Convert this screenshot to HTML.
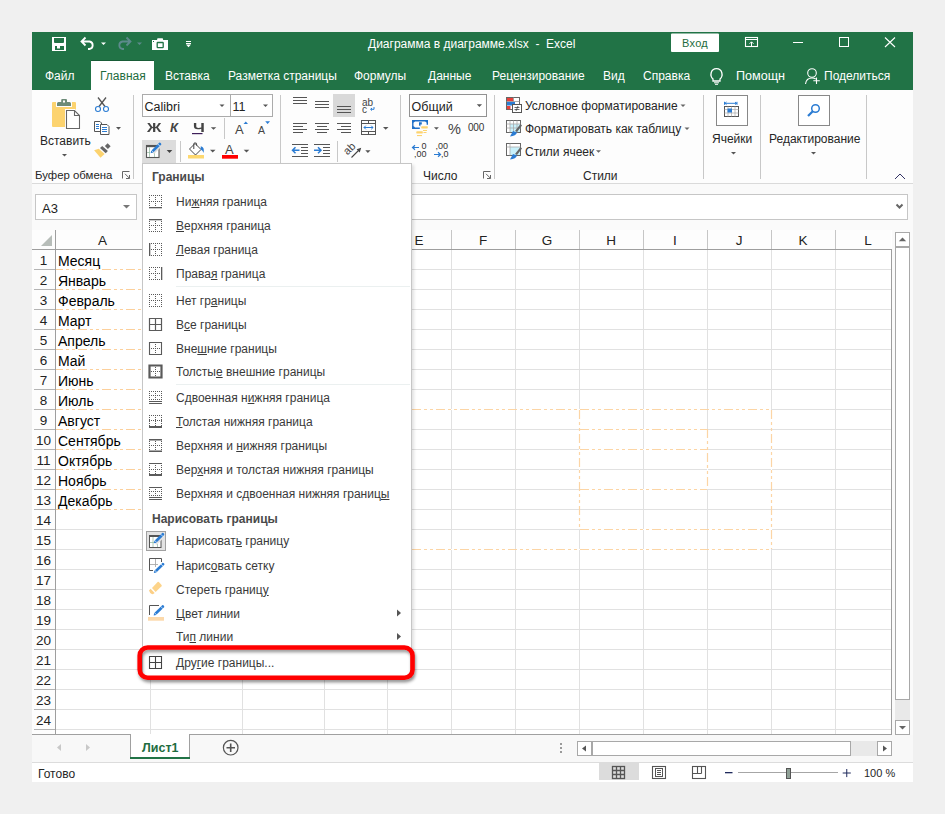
<!DOCTYPE html>
<html><head><meta charset="utf-8">
<style>
*{box-sizing:border-box}
html,body{margin:0;padding:0}
body{width:945px;height:814px;overflow:hidden;background:#f0f0f0;position:relative;font-family:"Liberation Sans",sans-serif;font-size:12px;color:#262626}
.a{position:absolute}
.t{position:absolute;white-space:pre;line-height:1}
svg{position:absolute;overflow:visible}
.ch{text-align:center;font-size:13.5px;color:#222}
.rh{left:32px;width:23px;text-align:center;font-size:13.5px;color:#222}
.cell{left:58px;font-size:14px;color:#000}
.rb{font-size:12px;color:#262626}
.mi{left:176px;font-size:12px;color:#3a3a3a}
.mh{left:152px;font-size:12px;font-weight:bold;color:#4a4a4a}
u{text-decoration:underline;text-underline-offset:1px}
</style></head><body>

<!-- window -->
<div class="a" style="left:32px;top:32px;width:881px;height:750px;background:#fafafa"></div>

<!-- title + tabs green -->
<div class="a" style="left:32px;top:32px;width:881px;height:58px;background:#217346"></div>
<div class="t" style="left:368px;top:38px;font-size:12px;color:#fff">Диаграмма в диаграмме.xlsx  -  Excel</div>

<svg style="left:0;top:0" width="945" height="95">
 <!-- save -->
 <rect x="52" y="37" width="14" height="14" fill="#fff"/>
 <path d="M54 38 H64 V42 Q64 43 63 43 H55 Q54 43 54 42 Z" fill="#217346"/>
 <rect x="55" y="46" width="9" height="4" fill="#217346"/>
 <rect x="57" y="46" width="3" height="2.5" fill="#fff"/>
 <!-- undo -->
 <path d="M85.5 37.5 L81.5 41.5 L85.5 45.5 M82 41.5 H89.5 A3.8 3.8 0 0 1 89.5 49 H88" fill="none" stroke="#fff" stroke-width="1.8"/>
 <path d="M101 42.5 H106 L103.5 45 Z" fill="#fff"/>
 <!-- redo disabled -->
 <path d="M126.5 37.5 L130.5 41.5 L126.5 45.5 M130 41.5 H122.5 A3.8 3.8 0 0 0 122.5 49 H124" fill="none" stroke="#5d8a8c" stroke-width="1.8"/>
 <path d="M137 42.5 H142 L139.5 45 Z" fill="#5d8a8c"/>
 <!-- camera -->
 <path d="M152 40 H157 L157.5 38.3 H162.7 L163.2 40 H168 V50 H152 Z" fill="#fff"/>
 <rect x="157.2" y="42.5" width="6" height="5.2" rx="0.6" fill="#fff" stroke="#217346" stroke-width="1.3"/>
 <rect x="153" y="41" width="1" height="1" fill="#217346"/>
 <!-- customize -->
 <rect x="186" y="41" width="5" height="1" fill="#fff"/>
 <rect x="186" y="43" width="5" height="1" fill="#fff"/>
 <path d="M186 44.5 H191 L188.5 47.2 Z" fill="#fff"/>
 <!-- login btn -->
 <rect x="671" y="33.5" width="48" height="18.5" rx="1" fill="#fff"/>
 <!-- ribbon display -->
 <rect x="745.5" y="37.5" width="12" height="9" fill="none" stroke="#fff" stroke-width="1.1"/>
 <rect x="745.5" y="39" width="12" height="1" fill="#fff"/>
 <path d="M751.5 46 V42 M749.5 43.8 L751.5 41.8 L753.5 43.8" fill="none" stroke="#fff" stroke-width="1"/>
 <!-- min max close -->
 <rect x="793" y="42" width="10" height="1" fill="#fff"/>
 <rect x="839.5" y="37.5" width="9" height="9" fill="none" stroke="#fff" stroke-width="1"/>
 <path d="M885 37.5 L895 47 M895 37.5 L885 47" stroke="#fff" stroke-width="1.1"/>
 <!-- bulb -->
 <path d="M713 79 C709.5 76 710.5 68.7 716.5 68.7 C722.5 68.7 723.5 76 720 79 V81 H713 Z" fill="none" stroke="#fff" stroke-width="1.3"/>
 <rect x="714" y="82.3" width="5" height="1" fill="#fff"/>
 <rect x="715" y="83.8" width="3" height="1" fill="#fff"/>
 <!-- person -->
 <circle cx="812" cy="73" r="4.3" fill="none" stroke="#fff" stroke-width="1.1"/>
 <path d="M805.5 84 C806 80 808.5 78 812 78 C813.5 78 814.8 78.4 815.8 79" fill="none" stroke="#fff" stroke-width="1.1"/>
 <path d="M816.5 77.5 V84 M813.3 80.8 H819.8" stroke="#fff" stroke-width="1.1"/>
</svg>
<div class="t" style="left:682px;top:38px;color:#1e6c40;font-size:11px;letter-spacing:0.3px">Вход</div>
<!-- tabs -->
<div class="a" style="left:91px;top:60px;width:63px;height:30px;background:#fff;border-top:1px solid #185c37"></div>
<div class="t" style="left:45px;top:70px;color:#fff;font-size:12px">Файл</div>
<div class="t" style="left:100px;top:70px;color:#1e6c40;font-size:12px">Главная</div>
<div class="t" style="left:165px;top:70px;color:#fff;font-size:12px">Вставка</div>
<div class="t" style="left:228px;top:70px;color:#fff;font-size:12px">Разметка страницы</div>
<div class="t" style="left:354px;top:70px;color:#fff;font-size:12px">Формулы</div>
<div class="t" style="left:428px;top:70px;color:#fff;font-size:12px">Данные</div>
<div class="t" style="left:492px;top:70px;color:#fff;font-size:12px">Рецензирование</div>
<div class="t" style="left:603px;top:70px;color:#fff;font-size:12px">Вид</div>
<div class="t" style="left:643px;top:70px;color:#fff;font-size:12px">Справка</div>
<div class="t" style="left:736px;top:69.7px;color:#fff;font-size:12.6px">Помощн</div>
<div class="t" style="left:824px;top:70px;color:#fff;font-size:12px">Поделиться</div>

<!-- ribbon -->
<div class="a" style="left:32px;top:90px;width:881px;height:94px;background:#fdfdfd;border-bottom:1px solid #dadada"></div>

<svg style="left:0;top:0" width="945" height="190">
 <!-- separators -->
 <g fill="#c8c8c8">
  <rect x="133" y="95" width="1" height="84"/>
  <rect x="280" y="95" width="1" height="84"/>
  <rect x="400" y="95" width="1" height="84"/>
  <rect x="494" y="95" width="1" height="84"/>
  <rect x="703" y="95" width="1" height="84"/>
  <rect x="760" y="95" width="1" height="84"/>
  <rect x="866" y="95" width="1" height="84"/>
  <rect x="224" y="118" width="1" height="21"/>
  <rect x="180" y="141" width="1" height="21"/>
  <rect x="337" y="141" width="1" height="21"/>
 </g>
 <!-- paste -->
 <path d="M53 102 H56 V107 H72 V102 H75 Q76 102 76 103 V126 Q76 127 75 127 H53 Q52 127 52 126 V103 Q52 102 53 102Z" fill="#fcd36f"/>
 <path d="M57 106 V103.5 Q57 102 58.5 102 H61.2 V100 Q61.2 99 62.2 99 H66 Q67 99 67 100 V102 H69.5 Q71 102 71 103.5 V106 Z" fill="#6c8b78"/>
 <rect x="63" y="100.5" width="2" height="2" fill="#fff"/>
 <path d="M65 109 H75 L81 115 V130 H65 Z" fill="#fff"/>
 <path d="M66.5 110.5 H74.5 L79.5 115.5 V128.5 H66.5 Z M74.5 110.5 V115.5 H79.5" fill="none" stroke="#666" stroke-width="1.1"/>
 <path d="M62 154 H67 L64.5 156.5Z" fill="#555"/>
 <!-- cut -->
 <path d="M98 97.5 L105 106.5 M106 97.5 L99 106.5" stroke="#555" stroke-width="1.3"/>
 <circle cx="98" cy="109" r="2.5" fill="#fff" stroke="#2b7cd3" stroke-width="1.1"/>
 <circle cx="106" cy="109" r="2.5" fill="#fff" stroke="#2b7cd3" stroke-width="1.1"/>
 <!-- copy -->
 <path d="M94.5 121.5 H100 L101.5 123 V131.5 H94.5 Z" fill="#fff" stroke="#555" stroke-width="1"/>
 <path d="M100.5 124.5 H107 L109 126.5 V134.5 H100.5 Z" fill="#fff" stroke="#555" stroke-width="1"/>
 <g fill="#2b7cd3"><rect x="96" y="124" width="3" height="1"/><rect x="96" y="126" width="3" height="1"/><rect x="96" y="128" width="3" height="1"/>
 <rect x="102" y="127" width="5" height="1"/><rect x="102" y="129" width="5" height="1"/><rect x="102" y="131" width="5" height="1"/></g>
 <path d="M116 127 H121 L118.5 129.7Z" fill="#555"/>
 <!-- format painter -->
 <path d="M107.6 143.2 L110.6 146.2 L107.9 148.9 L104.9 145.9Z" fill="#666"/>
 <path d="M102.2 145.9 L107.9 151 L105.7 153.2 L100 147.9Z" fill="#666"/>
 <path d="M94.1 150.3 L98.8 148.8 L104.6 154 L100.5 157.8Z" fill="#fcd36f"/>
 <!-- launcher clipboard -->
 <path d="M122.5 178.5 V171.5 H129.5 M125 173.8 L129.5 178.3 M129.5 175 V178.5 H126" fill="none" stroke="#666" stroke-width="1"/>
 <!-- font boxes -->
 <rect x="142.5" y="94.5" width="88" height="22" fill="#fff" stroke="#ababab"/>
 <rect x="230.5" y="94.5" width="42" height="22" fill="#fff" stroke="#ababab"/>
 <path d="M219.5 104.5 H224.5 L222 107Z" fill="#555"/>
 <path d="M263 104.5 H268 L265.5 107Z" fill="#555"/>
 <!-- row2 -->
 <rect x="192" y="133" width="10.5" height="1.2" fill="#3f1f5a"/>
 <path d="M210.8 127.2 H216.3 L213.5 129.8Z" fill="#555"/>
 <path d="M243.5 124 L245.8 121.5 L248 124Z" fill="#2b7cd3"/>
 <path d="M265.2 121.3 H270 L267.6 124Z" fill="#2b7cd3"/>
 <!-- borders btn -->
 <rect x="142" y="140" width="34" height="23" fill="#dcdcdc"/>
 <rect x="146.5" y="145.5" width="12.5" height="12" fill="#fff" stroke="#555" stroke-width="1.1"/><rect x="146" y="145" width="13.5" height="2.2" fill="#555"/>
 <path d="M149.5 147.5 V157 M154.5 153 V157 M147 152.5 H150" stroke="#9bbfa8" stroke-width="0.8"/>
 <path d="M152 152 L160 144 L162 146 L154 154Z" fill="#dcdcdc"/><path d="M150.60 153.20 L153.11 152.61 L161.35 144.46 Q161.25 142.66 159.45 142.54 L151.21 150.69 Z" fill="#2b7cd3"/><path d="M153.61 152.54 L151.29 150.20" stroke="#fff" stroke-width="0.7"/><path d="M160.00 146.22 L157.68 143.87" stroke="#fff" stroke-width="0.7"/>
 <path d="M166.7 150 H172.3 L169.5 153Z" fill="#444"/>
 <!-- fill -->
 <path d="M189.5 149 L195 143.5 L201 149.5 L195.5 155 Z" fill="#fff" stroke="#444" stroke-width="1"/>
 <path d="M193.8 149 V143.8 Q193.8 143 194.6 143 H195.8 Q196.6 143 196.6 143.8 V145.5" fill="none" stroke="#444" stroke-width="1"/>
 <path d="M200.8 146.3 Q204.8 147 203.6 153 Q202.8 150.2 200.6 149.6 Z" fill="#2b7cd3"/>
 <rect x="188" y="155" width="16" height="3.5" fill="#fdd86f"/>
 <path d="M210 149.8 H215.5 L212.7 152.6Z" fill="#555"/>
 <rect x="222" y="155" width="16" height="3.7" fill="#f00"/>
 <path d="M243.7 149.8 H249.3 L246.5 152.6Z" fill="#555"/>
 <!-- alignment -->
 <g fill="#555">
  <rect x="293" y="97" width="14" height="1"/><rect x="293" y="100" width="14" height="1"/><rect x="293" y="103" width="14" height="1"/>
  <rect x="315" y="101" width="14" height="1"/><rect x="315" y="104" width="14" height="1"/><rect x="315" y="107" width="14" height="1"/>
 </g>
 <rect x="333" y="94" width="22" height="23" fill="#d9d9d9"/>
 <g fill="#555">
  <rect x="337" y="106" width="14" height="1"/><rect x="337" y="109" width="14" height="1"/><rect x="337" y="112" width="14" height="1"/>
  <rect x="293" y="123" width="14" height="1"/><rect x="293" y="126" width="10" height="1"/><rect x="293" y="129" width="14" height="1"/><rect x="293" y="132" width="10" height="1"/>
  <rect x="315" y="123" width="14" height="1"/><rect x="317" y="126" width="10" height="1"/><rect x="315" y="129" width="14" height="1"/><rect x="317" y="132" width="10" height="1"/>
  <rect x="337" y="123" width="14" height="1"/><rect x="341" y="126" width="10" height="1"/><rect x="337" y="129" width="14" height="1"/><rect x="341" y="132" width="10" height="1"/>
  <rect x="292" y="144" width="16" height="1"/><rect x="301" y="147" width="7" height="1"/><rect x="301" y="150" width="7" height="1"/><rect x="301" y="153" width="7" height="1"/><rect x="292" y="156" width="16" height="1"/>
  <rect x="314" y="144" width="16" height="1"/><rect x="323" y="147" width="7" height="1"/><rect x="323" y="150" width="7" height="1"/><rect x="323" y="153" width="7" height="1"/><rect x="314" y="156" width="16" height="1"/>
 </g>
 <path d="M292.5 150.3 H299.5 M295.5 147.3 L292.5 150.3 L295.5 153.3" fill="none" stroke="#2b7cd3" stroke-width="1.5"/>
 <path d="M314 150.3 H321 M318 147.3 L321 150.3 L318 153.3" fill="none" stroke="#2b7cd3" stroke-width="1.5"/>
 <!-- wrap text -->
 <path d="M374 107 V109.3 H370.8 M372 108 L370.6 109.3 L372 110.6" fill="none" stroke="#2b7cd3" stroke-width="1"/>
 <!-- merge -->
 <rect x="361.5" y="120.5" width="14" height="14" fill="none" stroke="#555" stroke-width="1"/>
 <path d="M361.5 123.5 H375.5 M361.5 131.5 H375.5 M368.5 120.5 V123.5 M368.5 131.5 V134.5" stroke="#555" stroke-width="1"/>
 <path d="M364 127.5 H373 M365.8 125.7 L364 127.5 L365.8 129.3 M371.2 125.7 L373 127.5 L371.2 129.3" fill="none" stroke="#2b7cd3" stroke-width="1"/>
 <path d="M383 127 H388.5 L385.7 129.8Z" fill="#555"/>
 <!-- orientation -->
 <path d="M351.5 157.5 L358.5 150.5" fill="none" stroke="#444" stroke-width="1.1"/><path d="M361.2 147.8 L356.6 149.3 L359.7 152.4Z" fill="#444"/>
 <path d="M365.3 150.3 H370.5 L367.9 153.1Z" fill="#555"/>
 <!-- number -->
 <rect x="409.5" y="94.5" width="77" height="22" fill="#fff" stroke="#929292"/>
 <path d="M476.8 104.2 H482 L479.4 106.9Z" fill="#555"/>
 <path d="M419.8 128.3 H412.8 V120.7 H427.3 V124.8" fill="none" stroke="#1e6fc8" stroke-width="1.4"/>
 <path d="M412.2 120.1 H415.5 Q415 122.8 412.2 123.3Z M428 120.1 H424.7 Q425.2 122.8 428 123.3Z M412.2 128.9 H415.5 Q415 126.2 412.2 125.7Z" fill="#1e6fc8"/>
 <path d="M419 122.2 H421.8 V124.6 H420.4 V126.4 L419 125.3Z" fill="#1e6fc8"/>
 <path d="M421.5 126.3 H427.5 Q428.3 127.3 427.5 128.6 H421.5 Q420.8 127.4 421.5 126.3Z" fill="#fdd36f"/>
 <rect x="423" y="130" width="4" height="1" fill="#fdd36f"/><rect x="423.5" y="132" width="3" height="1" fill="#fdd36f"/>
 <path d="M416.6 131.2 H422.5 Q423.3 132.3 422.5 133.6 H416.6 Q415.8 132.4 416.6 131.2Z" fill="#fdd36f"/>
 <rect x="417" y="135" width="5" height="1.1" fill="#fdd36f"/>
 <path d="M434 127.2 H438.9 L436.4 129.7Z" fill="#555"/>
 <path d="M412.5 147.5 H419 M415 145.3 L412.5 147.5 L415 149.7" fill="none" stroke="#2b7cd3" stroke-width="1.2"/>
 <path d="M434 154.5 H440.5 M438 152.3 L440.5 154.5 L438 156.7" fill="none" stroke="#2b7cd3" stroke-width="1.2"/>
 <path d="M483.5 178.5 V171.5 H490.5 M486 173.8 L490.5 178.3 M490.5 175 V178.5 H487" fill="none" stroke="#666" stroke-width="1"/>
 <!-- styles icons -->
 <rect x="506.5" y="97.5" width="13" height="12" fill="#fff" stroke="#666" stroke-width="1"/>
 <rect x="507" y="98" width="6.5" height="3.5" fill="#e8403a"/>
 <rect x="507" y="102" width="8" height="3.5" fill="#2b7cd3"/>
 <rect x="507" y="106" width="3.5" height="3.2" fill="#e8403a"/>
 <path d="M513.5 97.5 V101.5 M506.5 101.5 H519.5" stroke="#999" stroke-width="0.8"/>
 <rect x="512.5" y="104.5" width="9" height="8" fill="#fff" stroke="#555" stroke-width="1"/>
 <path d="M514.5 107.5 H519.5 M514.5 109.5 H519.5 M518 106 L516 111" stroke="#444" stroke-width="0.8"/>
 <g>
  <rect x="506.5" y="120.5" width="14" height="12" fill="#fff" stroke="#666" stroke-width="1"/>
  <rect x="510" y="124" width="10" height="8" fill="#c8f1fb"/>
  <path d="M506.5 124 H520.5 M506.5 128 H520.5 M510 120.5 V132.5 M513.5 120.5 V132.5 M517 120.5 V132.5" stroke="#aaa" stroke-width="0.8"/>
  <path d="M515 131 L520.5 124 L522 125.5 L517 132Z" fill="#666"/>
  <path d="M510 136.5 L513 131 L517 132.5 Q516 136 510 136.5Z" fill="#2b7cd3"/>
 </g>
 <g>
  <rect x="506.5" y="143.5" width="14" height="12" fill="#fff" stroke="#666" stroke-width="1"/>
  <rect x="510" y="147" width="10" height="8" fill="#c8f1fb"/>
  <path d="M506.5 147 H520.5 M510 143.5 V155.5" stroke="#aaa" stroke-width="0.8"/>
  <path d="M515 154 L520.5 147 L522 148.5 L517 155Z" fill="#666"/>
  <path d="M510 159.5 L513 154 L517 155.5 Q516 159 510 159.5Z" fill="#2b7cd3"/>
 </g>
 <path d="M680.5 104.5 H685.5 L683 107Z" fill="#666"/>
 <path d="M684.5 127.5 H689.5 L687 130Z" fill="#666"/>
 <path d="M596 150.3 H601 L598.5 152.8Z" fill="#666"/>
 <!-- cells -->
 <rect x="716.5" y="95.5" width="31" height="30" fill="#fff" stroke="#888"/>
 <path d="M724.5 103.3 H737 M724.5 101.8 V104.8 M737 101.8 V104.8 M726.5 102 L725 103.3 L726.5 104.6 M735 102 L736.5 103.3 L735 104.6" fill="none" stroke="#2b7cd3" stroke-width="1"/>
 <rect x="724.5" y="106.5" width="14" height="10" fill="#fff" stroke="#555" stroke-width="1"/>
 <path d="M724.5 109.5 H738.5 M724.5 113 H738.5 M728 106.5 V116.5 M731.5 106.5 V116.5 M735 106.5 V116.5" stroke="#aaa" stroke-width="0.7"/>
 <rect x="727.5" y="108.5" width="4.5" height="4" fill="#2b7cd3"/>
 <path d="M731 152 H736 L733.5 154.5Z" fill="#555"/>
 <rect x="798.5" y="95.5" width="31" height="30" fill="#fff" stroke="#888"/>
 <circle cx="815.5" cy="108.5" r="3.8" fill="none" stroke="#2b7cd3" stroke-width="1.5"/>
 <path d="M812.8 111.2 L808 116" stroke="#2b7cd3" stroke-width="2.2"/>
 <path d="M811 152 H816 L813.5 154.5Z" fill="#555"/>
 <path d="M895 179 L900 174 L905 179" fill="none" stroke="#333366" stroke-width="1"/>
</svg>
<div class="t rb" style="left:40px;top:135px">Вставить</div>
<div class="t rb" style="left:35px;top:169.5px;font-size:11.4px">Буфер обмена</div>
<div class="t" style="left:144.5px;top:100.5px;font-size:12.5px;color:#222">Calibri</div>
<div class="t" style="left:232.5px;top:100.5px;font-size:12.5px;color:#222">11</div>
<div class="t" style="left:147px;top:121px;font-size:13px;font-weight:bold;color:#444;transform:scaleX(1.22);transform-origin:0 0">Ж</div>
<div class="t" style="left:170px;top:121px;font-size:13px;font-weight:bold;font-style:italic;color:#444">К</div>
<div class="t" style="left:192.5px;top:121px;font-size:13px;font-weight:bold;color:#444;transform:scaleX(1.3);transform-origin:0 0">Ч</div>
<div class="t" style="left:235px;top:123px;font-size:13px;color:#444">A</div>
<div class="t" style="left:258px;top:125px;font-size:10.5px;color:#444">A</div>
<div class="t" style="left:225px;top:143px;font-size:13px;color:#444">A</div>
<div class="t" style="left:362px;top:98px;font-size:10px;color:#444">ab</div><div class="t" style="left:362px;top:104.5px;font-size:10px;color:#444">c</div>
<div class="t" style="left:349px;top:146px;font-size:11px;color:#444;transform:rotate(-45deg);transform-origin:0 100%">ab</div>
<div class="t" style="left:411.5px;top:100.5px;font-size:12.5px;color:#222">Общий</div>
<div class="t" style="left:448px;top:122px;font-size:14.5px;color:#444">%</div>
<div class="t" style="left:468px;top:122.5px;font-size:10px;color:#333;letter-spacing:-0.2px">000</div>
<div class="t" style="left:421.5px;top:142px;font-size:9px;color:#333">0</div>
<div class="t" style="left:414px;top:149.5px;font-size:9px;color:#333">,00</div>
<div class="t" style="left:435.5px;top:142px;font-size:9px;color:#333">,00</div>
<div class="t" style="left:441px;top:149.5px;font-size:9px;color:#333">,0</div>
<div class="t rb" style="left:423px;top:170px">Число</div>
<div class="t rb" style="left:525px;top:100px">Условное форматирование</div>
<div class="t rb" style="left:525px;top:123px">Форматировать как таблицу</div>
<div class="t rb" style="left:525px;top:146px">Стили ячеек</div>
<div class="t rb" style="left:583px;top:170px">Стили</div>
<div class="t rb" style="left:712px;top:133px">Ячейки</div>
<div class="t rb" style="left:769px;top:133px">Редактирование</div>
<!-- formula bar -->
<div class="a" style="left:35px;top:194px;width:102px;height:26px;background:#fff;border:1px solid #c6c6c6"></div>
<div class="t" style="left:42px;top:202px;font-size:13px;color:#222">A3</div>
<div class="a" style="left:300px;top:194px;width:608px;height:26px;background:#fff;border:1px solid #c6c6c6"></div>
<svg style="left:0;top:0" width="945" height="250">
 <path d="M123 205 H130 L126.5 208.5Z" fill="#777"/>
 <path d="M896.5 204.5 L899.5 207.5 L902.5 204.5" fill="none" stroke="#666" stroke-width="2"/>
</svg>

<!-- grid -->
<div class="a" style="left:32px;top:230px;width:860px;height:505px;background:#fff"></div>
<div class="a" style="left:32px;top:230px;width:859px;height:19px;background:#fdfdfd"></div>
<div class="a" style="left:32px;top:249px;width:23px;height:485px;background:#fdfdfd"></div>
<!--GRIDSTART-->
<svg class="grid" style="left:0;top:0" width="945" height="814">
<rect x="150" y="250" width="1" height="484" fill="#e1e1e1"/>
<rect x="242" y="250" width="1" height="484" fill="#e1e1e1"/>
<rect x="324" y="250" width="1" height="484" fill="#e1e1e1"/>
<rect x="387" y="250" width="1" height="484" fill="#e1e1e1"/>
<rect x="451" y="250" width="1" height="484" fill="#e1e1e1"/>
<rect x="515" y="250" width="1" height="484" fill="#e1e1e1"/>
<rect x="579" y="250" width="1" height="484" fill="#e1e1e1"/>
<rect x="643" y="250" width="1" height="484" fill="#e1e1e1"/>
<rect x="707" y="250" width="1" height="484" fill="#e1e1e1"/>
<rect x="771" y="250" width="1" height="484" fill="#e1e1e1"/>
<rect x="835" y="250" width="1" height="484" fill="#e1e1e1"/>
<rect x="56" y="269" width="835" height="1" fill="#e1e1e1"/>
<rect x="34" y="269" width="21" height="1" fill="#b4b4b4"/>
<rect x="56" y="289" width="835" height="1" fill="#e1e1e1"/>
<rect x="34" y="289" width="21" height="1" fill="#b4b4b4"/>
<rect x="56" y="309" width="835" height="1" fill="#e1e1e1"/>
<rect x="34" y="309" width="21" height="1" fill="#b4b4b4"/>
<rect x="56" y="329" width="835" height="1" fill="#e1e1e1"/>
<rect x="34" y="329" width="21" height="1" fill="#b4b4b4"/>
<rect x="56" y="349" width="835" height="1" fill="#e1e1e1"/>
<rect x="34" y="349" width="21" height="1" fill="#b4b4b4"/>
<rect x="56" y="369" width="835" height="1" fill="#e1e1e1"/>
<rect x="34" y="369" width="21" height="1" fill="#b4b4b4"/>
<rect x="56" y="389" width="835" height="1" fill="#e1e1e1"/>
<rect x="34" y="389" width="21" height="1" fill="#b4b4b4"/>
<rect x="56" y="409" width="835" height="1" fill="#e1e1e1"/>
<rect x="34" y="409" width="21" height="1" fill="#b4b4b4"/>
<rect x="56" y="429" width="835" height="1" fill="#e1e1e1"/>
<rect x="34" y="429" width="21" height="1" fill="#b4b4b4"/>
<rect x="56" y="449" width="835" height="1" fill="#e1e1e1"/>
<rect x="34" y="449" width="21" height="1" fill="#b4b4b4"/>
<rect x="56" y="469" width="835" height="1" fill="#e1e1e1"/>
<rect x="34" y="469" width="21" height="1" fill="#b4b4b4"/>
<rect x="56" y="489" width="835" height="1" fill="#e1e1e1"/>
<rect x="34" y="489" width="21" height="1" fill="#b4b4b4"/>
<rect x="56" y="509" width="835" height="1" fill="#e1e1e1"/>
<rect x="34" y="509" width="21" height="1" fill="#b4b4b4"/>
<rect x="56" y="529" width="835" height="1" fill="#e1e1e1"/>
<rect x="34" y="529" width="21" height="1" fill="#b4b4b4"/>
<rect x="56" y="549" width="835" height="1" fill="#e1e1e1"/>
<rect x="34" y="549" width="21" height="1" fill="#b4b4b4"/>
<rect x="56" y="569" width="835" height="1" fill="#e1e1e1"/>
<rect x="34" y="569" width="21" height="1" fill="#b4b4b4"/>
<rect x="56" y="589" width="835" height="1" fill="#e1e1e1"/>
<rect x="34" y="589" width="21" height="1" fill="#b4b4b4"/>
<rect x="56" y="609" width="835" height="1" fill="#e1e1e1"/>
<rect x="34" y="609" width="21" height="1" fill="#b4b4b4"/>
<rect x="56" y="629" width="835" height="1" fill="#e1e1e1"/>
<rect x="34" y="629" width="21" height="1" fill="#b4b4b4"/>
<rect x="56" y="649" width="835" height="1" fill="#e1e1e1"/>
<rect x="34" y="649" width="21" height="1" fill="#b4b4b4"/>
<rect x="56" y="669" width="835" height="1" fill="#e1e1e1"/>
<rect x="34" y="669" width="21" height="1" fill="#b4b4b4"/>
<rect x="56" y="689" width="835" height="1" fill="#e1e1e1"/>
<rect x="34" y="689" width="21" height="1" fill="#b4b4b4"/>
<rect x="56" y="709" width="835" height="1" fill="#e1e1e1"/>
<rect x="34" y="709" width="21" height="1" fill="#b4b4b4"/>
<rect x="56" y="729" width="835" height="1" fill="#e1e1e1"/>
<rect x="34" y="729" width="21" height="1" fill="#b4b4b4"/>
<rect x="150" y="230" width="1" height="19" fill="#c6c6c6"/>
<rect x="242" y="230" width="1" height="19" fill="#c6c6c6"/>
<rect x="324" y="230" width="1" height="19" fill="#c6c6c6"/>
<rect x="387" y="230" width="1" height="19" fill="#c6c6c6"/>
<rect x="451" y="230" width="1" height="19" fill="#c6c6c6"/>
<rect x="515" y="230" width="1" height="19" fill="#c6c6c6"/>
<rect x="579" y="230" width="1" height="19" fill="#c6c6c6"/>
<rect x="643" y="230" width="1" height="19" fill="#c6c6c6"/>
<rect x="707" y="230" width="1" height="19" fill="#c6c6c6"/>
<rect x="771" y="230" width="1" height="19" fill="#c6c6c6"/>
<rect x="835" y="230" width="1" height="19" fill="#c6c6c6"/>
<rect x="32" y="249" width="860" height="1" fill="#9e9e9e"/>
<rect x="55" y="230" width="1" height="504" fill="#9e9e9e"/>
<rect x="891" y="249" width="1" height="486" fill="#9e9e9e"/>
<rect x="32" y="734" width="860" height="1" fill="#9e9e9e"/>
<path d="M41 246 L52 246 L52 235 Z" fill="#b7bdb9"/>
<line x1="56" y1="269.5" x2="150" y2="269.5" stroke="#fff" stroke-width="1"/><line x1="56" y1="269.5" x2="150" y2="269.5" stroke="#fcd09c" stroke-width="1.2" stroke-dasharray="9 3 3 3 3 3" stroke-dashoffset="2"/>
<line x1="56" y1="289.5" x2="150" y2="289.5" stroke="#fff" stroke-width="1"/><line x1="56" y1="289.5" x2="150" y2="289.5" stroke="#fcd09c" stroke-width="1.2" stroke-dasharray="9 3 3 3 3 3" stroke-dashoffset="2"/>
<line x1="56" y1="309.5" x2="150" y2="309.5" stroke="#fff" stroke-width="1"/><line x1="56" y1="309.5" x2="150" y2="309.5" stroke="#fcd09c" stroke-width="1.2" stroke-dasharray="9 3 3 3 3 3" stroke-dashoffset="2"/>
<line x1="56" y1="329.5" x2="150" y2="329.5" stroke="#fff" stroke-width="1"/><line x1="56" y1="329.5" x2="150" y2="329.5" stroke="#fcd09c" stroke-width="1.2" stroke-dasharray="9 3 3 3 3 3" stroke-dashoffset="2"/>
<line x1="56" y1="349.5" x2="150" y2="349.5" stroke="#fff" stroke-width="1"/><line x1="56" y1="349.5" x2="150" y2="349.5" stroke="#fcd09c" stroke-width="1.2" stroke-dasharray="9 3 3 3 3 3" stroke-dashoffset="2"/>
<line x1="56" y1="369.5" x2="150" y2="369.5" stroke="#fff" stroke-width="1"/><line x1="56" y1="369.5" x2="150" y2="369.5" stroke="#fcd09c" stroke-width="1.2" stroke-dasharray="9 3 3 3 3 3" stroke-dashoffset="2"/>
<line x1="56" y1="389.5" x2="150" y2="389.5" stroke="#fff" stroke-width="1"/><line x1="56" y1="389.5" x2="150" y2="389.5" stroke="#fcd09c" stroke-width="1.2" stroke-dasharray="9 3 3 3 3 3" stroke-dashoffset="2"/>
<line x1="56" y1="409.5" x2="150" y2="409.5" stroke="#fff" stroke-width="1"/><line x1="56" y1="409.5" x2="150" y2="409.5" stroke="#fcd09c" stroke-width="1.2" stroke-dasharray="9 3 3 3 3 3" stroke-dashoffset="2"/>
<line x1="56" y1="429.5" x2="150" y2="429.5" stroke="#fff" stroke-width="1"/><line x1="56" y1="429.5" x2="150" y2="429.5" stroke="#fcd09c" stroke-width="1.2" stroke-dasharray="9 3 3 3 3 3" stroke-dashoffset="2"/>
<line x1="56" y1="449.5" x2="150" y2="449.5" stroke="#fff" stroke-width="1"/><line x1="56" y1="449.5" x2="150" y2="449.5" stroke="#fcd09c" stroke-width="1.2" stroke-dasharray="9 3 3 3 3 3" stroke-dashoffset="2"/>
<line x1="56" y1="469.5" x2="150" y2="469.5" stroke="#fff" stroke-width="1"/><line x1="56" y1="469.5" x2="150" y2="469.5" stroke="#fcd09c" stroke-width="1.2" stroke-dasharray="9 3 3 3 3 3" stroke-dashoffset="2"/>
<line x1="56" y1="489.5" x2="150" y2="489.5" stroke="#fff" stroke-width="1"/><line x1="56" y1="489.5" x2="150" y2="489.5" stroke="#fcd09c" stroke-width="1.2" stroke-dasharray="9 3 3 3 3 3" stroke-dashoffset="2"/>
<line x1="56" y1="509.5" x2="150" y2="509.5" stroke="#fff" stroke-width="1"/><line x1="56" y1="509.5" x2="150" y2="509.5" stroke="#fcd09c" stroke-width="1.2" stroke-dasharray="9 3 3 3 3 3" stroke-dashoffset="2"/>
<line x1="412" y1="409.5" x2="771" y2="409.5" stroke="#fff" stroke-width="1"/>
<line x1="412" y1="549.5" x2="771" y2="549.5" stroke="#fff" stroke-width="1"/>
<line x1="771.5" y1="410" x2="771.5" y2="549" stroke="#fff" stroke-width="1"/>
<line x1="579.5" y1="410" x2="579.5" y2="529" stroke="#fff" stroke-width="1"/>
<line x1="580" y1="429.5" x2="707" y2="429.5" stroke="#fff" stroke-width="1"/>
<line x1="580" y1="449.5" x2="707" y2="449.5" stroke="#fff" stroke-width="1"/>
<line x1="707.5" y1="429" x2="707.5" y2="489" stroke="#fff" stroke-width="1"/>
<line x1="580" y1="489.5" x2="707" y2="489.5" stroke="#fff" stroke-width="1"/>
<line x1="580" y1="529.5" x2="771" y2="529.5" stroke="#fff" stroke-width="1"/>
<line x1="412" y1="409.5" x2="771" y2="409.5" stroke="#fcd5a5" stroke-width="1.2" stroke-dasharray="9 3 3 3 3 3"/>
<line x1="412" y1="549.5" x2="771" y2="549.5" stroke="#fcd5a5" stroke-width="1.2" stroke-dasharray="9 3 3 3 3 3"/>
<line x1="771.5" y1="410" x2="771.5" y2="549" stroke="#fcd5a5" stroke-width="1.2" stroke-dasharray="9 3 3 3 3 3"/>
<line x1="579.5" y1="410" x2="579.5" y2="529" stroke="#fcd5a5" stroke-width="1.2" stroke-dasharray="9 3 3 3 3 3"/>
<line x1="580" y1="429.5" x2="707" y2="429.5" stroke="#fcd5a5" stroke-width="1.2" stroke-dasharray="9 3 3 3 3 3"/>
<line x1="580" y1="449.5" x2="707" y2="449.5" stroke="#fcd5a5" stroke-width="1.2" stroke-dasharray="9 3 3 3 3 3"/>
<line x1="707.5" y1="429" x2="707.5" y2="489" stroke="#fcd5a5" stroke-width="1.2" stroke-dasharray="9 3 3 3 3 3"/>
<line x1="580" y1="489.5" x2="707" y2="489.5" stroke="#fcd5a5" stroke-width="1.2" stroke-dasharray="9 3 3 3 3 3"/>
<line x1="580" y1="529.5" x2="771" y2="529.5" stroke="#fcd5a5" stroke-width="1.2" stroke-dasharray="9 3 3 3 3 3"/>
</svg>
<div class="t ch" style="left:55px;width:95px;top:234px">A</div>
<div class="t ch" style="left:150px;width:92px;top:234px">B</div>
<div class="t ch" style="left:242px;width:82px;top:234px">C</div>
<div class="t ch" style="left:324px;width:63px;top:234px">D</div>
<div class="t ch" style="left:387px;width:64px;top:234px">E</div>
<div class="t ch" style="left:451px;width:64px;top:234px">F</div>
<div class="t ch" style="left:515px;width:64px;top:234px">G</div>
<div class="t ch" style="left:579px;width:64px;top:234px">H</div>
<div class="t ch" style="left:643px;width:64px;top:234px">I</div>
<div class="t ch" style="left:707px;width:64px;top:234px">J</div>
<div class="t ch" style="left:771px;width:64px;top:234px">K</div>
<div class="t ch" style="left:836px;width:64px;top:234px">L</div>
<div class="t rh" style="top:254px">1</div>
<div class="t rh" style="top:274px">2</div>
<div class="t rh" style="top:294px">3</div>
<div class="t rh" style="top:314px">4</div>
<div class="t rh" style="top:334px">5</div>
<div class="t rh" style="top:354px">6</div>
<div class="t rh" style="top:374px">7</div>
<div class="t rh" style="top:394px">8</div>
<div class="t rh" style="top:414px">9</div>
<div class="t rh" style="top:434px">10</div>
<div class="t rh" style="top:454px">11</div>
<div class="t rh" style="top:474px">12</div>
<div class="t rh" style="top:494px">13</div>
<div class="t rh" style="top:514px">14</div>
<div class="t rh" style="top:534px">15</div>
<div class="t rh" style="top:554px">16</div>
<div class="t rh" style="top:574px">17</div>
<div class="t rh" style="top:594px">18</div>
<div class="t rh" style="top:614px">19</div>
<div class="t rh" style="top:634px">20</div>
<div class="t rh" style="top:654px">21</div>
<div class="t rh" style="top:674px">22</div>
<div class="t rh" style="top:694px">23</div>
<div class="t rh" style="top:714px">24</div>
<div class="t cell" style="top:254px">Месяц</div>
<div class="t cell" style="top:274px">Январь</div>
<div class="t cell" style="top:294px">Февраль</div>
<div class="t cell" style="top:314px">Март</div>
<div class="t cell" style="top:334px">Апрель</div>
<div class="t cell" style="top:354px">Май</div>
<div class="t cell" style="top:374px">Июнь</div>
<div class="t cell" style="top:394px">Июль</div>
<div class="t cell" style="top:414px">Август</div>
<div class="t cell" style="top:434px">Сентябрь</div>
<div class="t cell" style="top:454px">Октябрь</div>
<div class="t cell" style="top:474px">Ноябрь</div>
<div class="t cell" style="top:494px">Декабрь</div>
<!--GRIDEND-->

<!-- sheet tabs -->
<div class="a" style="left:32px;top:735px;width:881px;height:28px;background:#f8f8f8"></div>
<svg style="left:0;top:0" width="945" height="814">
 <!-- vertical scrollbar -->
 <rect x="895" y="232" width="15" height="502" fill="#e9e9e9"/>
 <rect x="895.5" y="232.5" width="14" height="14" fill="#fff" stroke="#a8a8a8"/>
 <path d="M898.8 241.2 H906.2 L902.5 237.4Z" fill="#666"/>
 <rect x="895.5" y="247.5" width="14" height="452" fill="#fff" stroke="#a8a8a8"/>
 <rect x="895.5" y="720.5" width="14" height="14" fill="#fff" stroke="#a8a8a8"/>
 <path d="M899 726 H906 L902.5 729.5Z" fill="#666"/>
 <!-- tab -->
 <rect x="32" y="734" width="99" height="1" fill="#a0a0a0"/>
 <rect x="189" y="734" width="702" height="1" fill="#a0a0a0"/>
 <rect x="130" y="734" width="60" height="24" fill="#fff"/>
 <rect x="130" y="734" width="1" height="24" fill="#a0a0a0"/>
 <rect x="189" y="734" width="1" height="24" fill="#a0a0a0"/>
 <rect x="130" y="757" width="60" height="2" fill="#217346"/>
 <path d="M61 744 L57 747.5 L61 751Z" fill="#c8c8c8"/>
 <path d="M86 744 L90 747.5 L86 751Z" fill="#c8c8c8"/>
 <circle cx="230.7" cy="747.7" r="7.3" fill="none" stroke="#555" stroke-width="1.2"/>
 <path d="M226.5 747.7 H235 M230.7 743.5 V752" stroke="#555" stroke-width="1.6"/>
 <g fill="#9a9a9a"><rect x="560" y="743" width="2" height="2"/><rect x="560" y="747" width="2" height="2"/><rect x="560" y="751" width="2" height="2"/></g>
 <!-- h scrollbar -->
 <rect x="577" y="741" width="314" height="15" fill="#e9e9e9"/>
 <rect x="577.5" y="741.5" width="14" height="14" fill="#fff" stroke="#a8a8a8"/>
 <path d="M586 745.5 L582 748.5 L586 751.5Z" fill="#555"/>
 <rect x="592.5" y="741.5" width="258" height="14" fill="#fff" stroke="#a8a8a8"/>
 <rect x="877.5" y="741.5" width="14" height="14" fill="#fff" stroke="#a8a8a8"/>
 <path d="M883 745.5 L887 748.5 L883 751.5Z" fill="#555"/>
</svg>
<div class="t" style="left:142px;top:741.5px;font-size:12.5px;font-weight:bold;color:#1e6c40">Лист1</div>
<!-- status -->
<div class="a" style="left:32px;top:762px;width:881px;height:20px;background:#fff;border-top:1px solid #dcdcdc"></div>
<div class="t" style="left:38px;top:768px;color:#262626">Готово</div>
<svg style="left:0;top:0" width="945" height="814">
 <rect x="599" y="763" width="40" height="17" fill="#dcdcdc"/>
 <rect x="612.5" y="766.5" width="12" height="12" fill="none" stroke="#555" stroke-width="1.3"/>
 <path d="M612.5 770.5 H624.5 M612.5 774.5 H624.5 M616.5 766.5 V778.5 M620.5 766.5 V778.5" stroke="#555" stroke-width="1.3"/>
 <rect x="652.5" y="766.5" width="13" height="12" fill="none" stroke="#555" stroke-width="1.1"/>
 <rect x="655.5" y="768.5" width="7" height="8" fill="none" stroke="#555" stroke-width="1"/>
 <g fill="#555"><rect x="657" y="770" width="4" height="1"/><rect x="657" y="772" width="4" height="1"/><rect x="657" y="774" width="4" height="1"/></g>
 <rect x="692.5" y="766.5" width="13" height="12" fill="none" stroke="#555" stroke-width="1.1"/>
 <path d="M697.5 766.5 V773.5 M701.5 766.5 V773.5 M692.5 773.5 H701.5" stroke="#555" stroke-width="1.1"/>
 <rect x="725" y="772" width="7.5" height="1.3" fill="#1f2a5c"/>
 <rect x="738" y="772" width="100" height="1" fill="#a6a6a6"/>
 <rect x="786.5" y="768.5" width="4" height="10" fill="#8fa096" stroke="#555" stroke-width="1"/>
 <path d="M842.7 773 H850.8 M846.75 769 V777.1" stroke="#1f2a5c" stroke-width="1"/>
</svg>
<div class="t" style="left:864px;top:768px;font-size:11px;color:#262626">100 %</div>

<!-- menu -->
<div class="a" style="left:142px;top:163px;width:270px;height:515px;background:#fff;border:1px solid #c6c6c6;box-shadow:2px 2px 3px rgba(0,0,0,0.12)"></div>
<!--MENUSTART-->
<svg style="left:0;top:0" width="945" height="814">
<g fill="#5a5a5a"><rect x="149" y="195" width="1" height="1"/><rect x="151" y="195" width="1" height="1"/><rect x="153" y="195" width="1" height="1"/><rect x="155" y="195" width="1" height="1"/><rect x="157" y="195" width="1" height="1"/><rect x="159" y="195" width="1" height="1"/><rect x="161" y="195" width="1" height="1"/><rect x="149" y="201" width="1" height="1"/><rect x="151" y="201" width="1" height="1"/><rect x="153" y="201" width="1" height="1"/><rect x="155" y="201" width="1" height="1"/><rect x="157" y="201" width="1" height="1"/><rect x="159" y="201" width="1" height="1"/><rect x="161" y="201" width="1" height="1"/><rect x="149" y="195" width="1" height="1"/><rect x="149" y="197" width="1" height="1"/><rect x="149" y="199" width="1" height="1"/><rect x="149" y="201" width="1" height="1"/><rect x="149" y="203" width="1" height="1"/><rect x="149" y="205" width="1" height="1"/><rect x="149" y="207" width="1" height="1"/><rect x="155" y="195" width="1" height="1"/><rect x="155" y="197" width="1" height="1"/><rect x="155" y="199" width="1" height="1"/><rect x="155" y="201" width="1" height="1"/><rect x="155" y="203" width="1" height="1"/><rect x="155" y="205" width="1" height="1"/><rect x="155" y="207" width="1" height="1"/><rect x="161" y="195" width="1" height="1"/><rect x="161" y="197" width="1" height="1"/><rect x="161" y="199" width="1" height="1"/><rect x="161" y="201" width="1" height="1"/><rect x="161" y="203" width="1" height="1"/><rect x="161" y="205" width="1" height="1"/><rect x="161" y="207" width="1" height="1"/><rect x="149" y="207" width="13" height="1.3"/></g>
<g fill="#5a5a5a"><rect x="149" y="225" width="1" height="1"/><rect x="151" y="225" width="1" height="1"/><rect x="153" y="225" width="1" height="1"/><rect x="155" y="225" width="1" height="1"/><rect x="157" y="225" width="1" height="1"/><rect x="159" y="225" width="1" height="1"/><rect x="161" y="225" width="1" height="1"/><rect x="149" y="231" width="1" height="1"/><rect x="151" y="231" width="1" height="1"/><rect x="153" y="231" width="1" height="1"/><rect x="155" y="231" width="1" height="1"/><rect x="157" y="231" width="1" height="1"/><rect x="159" y="231" width="1" height="1"/><rect x="161" y="231" width="1" height="1"/><rect x="149" y="219" width="1" height="1"/><rect x="149" y="221" width="1" height="1"/><rect x="149" y="223" width="1" height="1"/><rect x="149" y="225" width="1" height="1"/><rect x="149" y="227" width="1" height="1"/><rect x="149" y="229" width="1" height="1"/><rect x="149" y="231" width="1" height="1"/><rect x="155" y="219" width="1" height="1"/><rect x="155" y="221" width="1" height="1"/><rect x="155" y="223" width="1" height="1"/><rect x="155" y="225" width="1" height="1"/><rect x="155" y="227" width="1" height="1"/><rect x="155" y="229" width="1" height="1"/><rect x="155" y="231" width="1" height="1"/><rect x="161" y="219" width="1" height="1"/><rect x="161" y="221" width="1" height="1"/><rect x="161" y="223" width="1" height="1"/><rect x="161" y="225" width="1" height="1"/><rect x="161" y="227" width="1" height="1"/><rect x="161" y="229" width="1" height="1"/><rect x="161" y="231" width="1" height="1"/><rect x="149" y="219" width="13" height="1.3"/></g>
<g fill="#5a5a5a"><rect x="149" y="243" width="1" height="1"/><rect x="151" y="243" width="1" height="1"/><rect x="153" y="243" width="1" height="1"/><rect x="155" y="243" width="1" height="1"/><rect x="157" y="243" width="1" height="1"/><rect x="159" y="243" width="1" height="1"/><rect x="161" y="243" width="1" height="1"/><rect x="149" y="249" width="1" height="1"/><rect x="151" y="249" width="1" height="1"/><rect x="153" y="249" width="1" height="1"/><rect x="155" y="249" width="1" height="1"/><rect x="157" y="249" width="1" height="1"/><rect x="159" y="249" width="1" height="1"/><rect x="161" y="249" width="1" height="1"/><rect x="149" y="255" width="1" height="1"/><rect x="151" y="255" width="1" height="1"/><rect x="153" y="255" width="1" height="1"/><rect x="155" y="255" width="1" height="1"/><rect x="157" y="255" width="1" height="1"/><rect x="159" y="255" width="1" height="1"/><rect x="161" y="255" width="1" height="1"/><rect x="155" y="243" width="1" height="1"/><rect x="155" y="245" width="1" height="1"/><rect x="155" y="247" width="1" height="1"/><rect x="155" y="249" width="1" height="1"/><rect x="155" y="251" width="1" height="1"/><rect x="155" y="253" width="1" height="1"/><rect x="155" y="255" width="1" height="1"/><rect x="161" y="243" width="1" height="1"/><rect x="161" y="245" width="1" height="1"/><rect x="161" y="247" width="1" height="1"/><rect x="161" y="249" width="1" height="1"/><rect x="161" y="251" width="1" height="1"/><rect x="161" y="253" width="1" height="1"/><rect x="161" y="255" width="1" height="1"/><rect x="149" y="243" width="1.3" height="13"/></g>
<g fill="#5a5a5a"><rect x="149" y="267" width="1" height="1"/><rect x="151" y="267" width="1" height="1"/><rect x="153" y="267" width="1" height="1"/><rect x="155" y="267" width="1" height="1"/><rect x="157" y="267" width="1" height="1"/><rect x="159" y="267" width="1" height="1"/><rect x="161" y="267" width="1" height="1"/><rect x="149" y="273" width="1" height="1"/><rect x="151" y="273" width="1" height="1"/><rect x="153" y="273" width="1" height="1"/><rect x="155" y="273" width="1" height="1"/><rect x="157" y="273" width="1" height="1"/><rect x="159" y="273" width="1" height="1"/><rect x="161" y="273" width="1" height="1"/><rect x="149" y="279" width="1" height="1"/><rect x="151" y="279" width="1" height="1"/><rect x="153" y="279" width="1" height="1"/><rect x="155" y="279" width="1" height="1"/><rect x="157" y="279" width="1" height="1"/><rect x="159" y="279" width="1" height="1"/><rect x="161" y="279" width="1" height="1"/><rect x="149" y="267" width="1" height="1"/><rect x="149" y="269" width="1" height="1"/><rect x="149" y="271" width="1" height="1"/><rect x="149" y="273" width="1" height="1"/><rect x="149" y="275" width="1" height="1"/><rect x="149" y="277" width="1" height="1"/><rect x="149" y="279" width="1" height="1"/><rect x="155" y="267" width="1" height="1"/><rect x="155" y="269" width="1" height="1"/><rect x="155" y="271" width="1" height="1"/><rect x="155" y="273" width="1" height="1"/><rect x="155" y="275" width="1" height="1"/><rect x="155" y="277" width="1" height="1"/><rect x="155" y="279" width="1" height="1"/><rect x="161" y="267" width="1.3" height="13"/></g>
<g fill="#5a5a5a"><rect x="149" y="294" width="1" height="1"/><rect x="151" y="294" width="1" height="1"/><rect x="153" y="294" width="1" height="1"/><rect x="155" y="294" width="1" height="1"/><rect x="157" y="294" width="1" height="1"/><rect x="159" y="294" width="1" height="1"/><rect x="161" y="294" width="1" height="1"/><rect x="149" y="300" width="1" height="1"/><rect x="151" y="300" width="1" height="1"/><rect x="153" y="300" width="1" height="1"/><rect x="155" y="300" width="1" height="1"/><rect x="157" y="300" width="1" height="1"/><rect x="159" y="300" width="1" height="1"/><rect x="161" y="300" width="1" height="1"/><rect x="149" y="306" width="1" height="1"/><rect x="151" y="306" width="1" height="1"/><rect x="153" y="306" width="1" height="1"/><rect x="155" y="306" width="1" height="1"/><rect x="157" y="306" width="1" height="1"/><rect x="159" y="306" width="1" height="1"/><rect x="161" y="306" width="1" height="1"/><rect x="149" y="294" width="1" height="1"/><rect x="149" y="296" width="1" height="1"/><rect x="149" y="298" width="1" height="1"/><rect x="149" y="300" width="1" height="1"/><rect x="149" y="302" width="1" height="1"/><rect x="149" y="304" width="1" height="1"/><rect x="149" y="306" width="1" height="1"/><rect x="155" y="294" width="1" height="1"/><rect x="155" y="296" width="1" height="1"/><rect x="155" y="298" width="1" height="1"/><rect x="155" y="300" width="1" height="1"/><rect x="155" y="302" width="1" height="1"/><rect x="155" y="304" width="1" height="1"/><rect x="155" y="306" width="1" height="1"/><rect x="161" y="294" width="1" height="1"/><rect x="161" y="296" width="1" height="1"/><rect x="161" y="298" width="1" height="1"/><rect x="161" y="300" width="1" height="1"/><rect x="161" y="302" width="1" height="1"/><rect x="161" y="304" width="1" height="1"/><rect x="161" y="306" width="1" height="1"/></g>
<g fill="#5a5a5a"></g><path d="M149.5 318.5 h12 v12 h-12 Z M149.5 324.5 h12 M155.5 318.5 v12" fill="none" stroke="#5a5a5a" stroke-width="1.2"/><g fill="#5a5a5a"></g>
<g fill="#5a5a5a"><rect x="149" y="348" width="1" height="1"/><rect x="151" y="348" width="1" height="1"/><rect x="153" y="348" width="1" height="1"/><rect x="155" y="348" width="1" height="1"/><rect x="157" y="348" width="1" height="1"/><rect x="159" y="348" width="1" height="1"/><rect x="161" y="348" width="1" height="1"/><rect x="155" y="342" width="1" height="1"/><rect x="155" y="344" width="1" height="1"/><rect x="155" y="346" width="1" height="1"/><rect x="155" y="348" width="1" height="1"/><rect x="155" y="350" width="1" height="1"/><rect x="155" y="352" width="1" height="1"/><rect x="155" y="354" width="1" height="1"/></g><path d="M149.5 342.5 h12 v12 h-12 Z" fill="none" stroke="#5a5a5a" stroke-width="1.1"/><g fill="#5a5a5a"></g>
<g fill="#5a5a5a"><rect x="149" y="371" width="1" height="1"/><rect x="151" y="371" width="1" height="1"/><rect x="153" y="371" width="1" height="1"/><rect x="155" y="371" width="1" height="1"/><rect x="157" y="371" width="1" height="1"/><rect x="159" y="371" width="1" height="1"/><rect x="161" y="371" width="1" height="1"/><rect x="155" y="365" width="1" height="1"/><rect x="155" y="367" width="1" height="1"/><rect x="155" y="369" width="1" height="1"/><rect x="155" y="371" width="1" height="1"/><rect x="155" y="373" width="1" height="1"/><rect x="155" y="375" width="1" height="1"/><rect x="155" y="377" width="1" height="1"/></g><path d="M149.5 365.5 h12 v12 h-12 Z" fill="none" stroke="#5a5a5a" stroke-width="2.2"/><g fill="#5a5a5a"></g>
<g fill="#5a5a5a"><rect x="149" y="391" width="1" height="1"/><rect x="151" y="391" width="1" height="1"/><rect x="153" y="391" width="1" height="1"/><rect x="155" y="391" width="1" height="1"/><rect x="157" y="391" width="1" height="1"/><rect x="159" y="391" width="1" height="1"/><rect x="161" y="391" width="1" height="1"/><rect x="149" y="395" width="1" height="1"/><rect x="151" y="395" width="1" height="1"/><rect x="153" y="395" width="1" height="1"/><rect x="155" y="395" width="1" height="1"/><rect x="157" y="395" width="1" height="1"/><rect x="159" y="395" width="1" height="1"/><rect x="161" y="395" width="1" height="1"/><rect x="149" y="399" width="1" height="1"/><rect x="151" y="399" width="1" height="1"/><rect x="153" y="399" width="1" height="1"/><rect x="155" y="399" width="1" height="1"/><rect x="157" y="399" width="1" height="1"/><rect x="159" y="399" width="1" height="1"/><rect x="161" y="399" width="1" height="1"/><rect x="149" y="391" width="1" height="1"/><rect x="149" y="393" width="1" height="1"/><rect x="149" y="395" width="1" height="1"/><rect x="149" y="397" width="1" height="1"/><rect x="149" y="399" width="1" height="1"/><rect x="155" y="391" width="1" height="1"/><rect x="155" y="393" width="1" height="1"/><rect x="155" y="395" width="1" height="1"/><rect x="155" y="397" width="1" height="1"/><rect x="155" y="399" width="1" height="1"/><rect x="161" y="391" width="1" height="1"/><rect x="161" y="393" width="1" height="1"/><rect x="161" y="395" width="1" height="1"/><rect x="161" y="397" width="1" height="1"/><rect x="161" y="399" width="1" height="1"/><rect x="149" y="401" width="13" height="1"/><rect x="149" y="403" width="13" height="1"/></g>
<g fill="#5a5a5a"><rect x="149" y="415" width="1" height="1"/><rect x="151" y="415" width="1" height="1"/><rect x="153" y="415" width="1" height="1"/><rect x="155" y="415" width="1" height="1"/><rect x="157" y="415" width="1" height="1"/><rect x="159" y="415" width="1" height="1"/><rect x="161" y="415" width="1" height="1"/><rect x="149" y="420" width="1" height="1"/><rect x="151" y="420" width="1" height="1"/><rect x="153" y="420" width="1" height="1"/><rect x="155" y="420" width="1" height="1"/><rect x="157" y="420" width="1" height="1"/><rect x="159" y="420" width="1" height="1"/><rect x="161" y="420" width="1" height="1"/><rect x="149" y="415" width="1" height="1"/><rect x="149" y="417" width="1" height="1"/><rect x="149" y="419" width="1" height="1"/><rect x="149" y="421" width="1" height="1"/><rect x="149" y="423" width="1" height="1"/><rect x="149" y="425" width="1" height="1"/><rect x="155" y="415" width="1" height="1"/><rect x="155" y="417" width="1" height="1"/><rect x="155" y="419" width="1" height="1"/><rect x="155" y="421" width="1" height="1"/><rect x="155" y="423" width="1" height="1"/><rect x="155" y="425" width="1" height="1"/><rect x="161" y="415" width="1" height="1"/><rect x="161" y="417" width="1" height="1"/><rect x="161" y="419" width="1" height="1"/><rect x="161" y="421" width="1" height="1"/><rect x="161" y="423" width="1" height="1"/><rect x="161" y="425" width="1" height="1"/><rect x="149" y="426" width="13" height="2"/></g>
<g fill="#5a5a5a"><rect x="149" y="445" width="1" height="1"/><rect x="151" y="445" width="1" height="1"/><rect x="153" y="445" width="1" height="1"/><rect x="155" y="445" width="1" height="1"/><rect x="157" y="445" width="1" height="1"/><rect x="159" y="445" width="1" height="1"/><rect x="161" y="445" width="1" height="1"/><rect x="149" y="439" width="1" height="1"/><rect x="149" y="441" width="1" height="1"/><rect x="149" y="443" width="1" height="1"/><rect x="149" y="445" width="1" height="1"/><rect x="149" y="447" width="1" height="1"/><rect x="149" y="449" width="1" height="1"/><rect x="149" y="451" width="1" height="1"/><rect x="155" y="439" width="1" height="1"/><rect x="155" y="441" width="1" height="1"/><rect x="155" y="443" width="1" height="1"/><rect x="155" y="445" width="1" height="1"/><rect x="155" y="447" width="1" height="1"/><rect x="155" y="449" width="1" height="1"/><rect x="155" y="451" width="1" height="1"/><rect x="161" y="439" width="1" height="1"/><rect x="161" y="441" width="1" height="1"/><rect x="161" y="443" width="1" height="1"/><rect x="161" y="445" width="1" height="1"/><rect x="161" y="447" width="1" height="1"/><rect x="161" y="449" width="1" height="1"/><rect x="161" y="451" width="1" height="1"/><rect x="149" y="439" width="13" height="1.5"/><rect x="149" y="450.5" width="13" height="1.5"/></g>
<g fill="#5a5a5a"><rect x="149" y="469" width="1" height="1"/><rect x="151" y="469" width="1" height="1"/><rect x="153" y="469" width="1" height="1"/><rect x="155" y="469" width="1" height="1"/><rect x="157" y="469" width="1" height="1"/><rect x="159" y="469" width="1" height="1"/><rect x="161" y="469" width="1" height="1"/><rect x="149" y="463" width="1" height="1"/><rect x="149" y="465" width="1" height="1"/><rect x="149" y="467" width="1" height="1"/><rect x="149" y="469" width="1" height="1"/><rect x="149" y="471" width="1" height="1"/><rect x="149" y="473" width="1" height="1"/><rect x="149" y="475" width="1" height="1"/><rect x="155" y="463" width="1" height="1"/><rect x="155" y="465" width="1" height="1"/><rect x="155" y="467" width="1" height="1"/><rect x="155" y="469" width="1" height="1"/><rect x="155" y="471" width="1" height="1"/><rect x="155" y="473" width="1" height="1"/><rect x="155" y="475" width="1" height="1"/><rect x="161" y="463" width="1" height="1"/><rect x="161" y="465" width="1" height="1"/><rect x="161" y="467" width="1" height="1"/><rect x="161" y="469" width="1" height="1"/><rect x="161" y="471" width="1" height="1"/><rect x="161" y="473" width="1" height="1"/><rect x="161" y="475" width="1" height="1"/><rect x="149" y="463" width="13" height="1"/><rect x="149" y="474" width="13" height="2"/></g>
<g fill="#5a5a5a"><rect x="149" y="491" width="1" height="1"/><rect x="151" y="491" width="1" height="1"/><rect x="153" y="491" width="1" height="1"/><rect x="155" y="491" width="1" height="1"/><rect x="157" y="491" width="1" height="1"/><rect x="159" y="491" width="1" height="1"/><rect x="161" y="491" width="1" height="1"/><rect x="149" y="495" width="1" height="1"/><rect x="151" y="495" width="1" height="1"/><rect x="153" y="495" width="1" height="1"/><rect x="155" y="495" width="1" height="1"/><rect x="157" y="495" width="1" height="1"/><rect x="159" y="495" width="1" height="1"/><rect x="161" y="495" width="1" height="1"/><rect x="149" y="487" width="1" height="1"/><rect x="149" y="489" width="1" height="1"/><rect x="149" y="491" width="1" height="1"/><rect x="149" y="493" width="1" height="1"/><rect x="149" y="495" width="1" height="1"/><rect x="155" y="487" width="1" height="1"/><rect x="155" y="489" width="1" height="1"/><rect x="155" y="491" width="1" height="1"/><rect x="155" y="493" width="1" height="1"/><rect x="155" y="495" width="1" height="1"/><rect x="161" y="487" width="1" height="1"/><rect x="161" y="489" width="1" height="1"/><rect x="161" y="491" width="1" height="1"/><rect x="161" y="493" width="1" height="1"/><rect x="161" y="495" width="1" height="1"/><rect x="149" y="487" width="13" height="1"/><rect x="149" y="497" width="13" height="1"/><rect x="149" y="499" width="13" height="1"/></g>
<g fill="#5a5a5a"></g><rect x="146.5" y="531.5" width="19" height="19" fill="#e3e3e3" stroke="#a0a0a0"/><rect x="149.5" y="535.5" width="11.5" height="12" fill="#fff" stroke="#555" stroke-width="1"/><rect x="149" y="535" width="12.5" height="2" fill="#555"/><path d="M150 542.5 H156 M153 537 V547 M157.5 544 V547" stroke="#9bbfa8" stroke-width="0.8"/><path d="M155 543.5 L163.5 535 L165 536.5 L156.5 545Z" fill="#e3e3e3"/><path d="M153.80 543.20 L156.32 542.63 L164.34 534.76 Q164.26 532.96 162.46 532.84 L154.43 540.70 Z" fill="#2b7cd3"/><path d="M156.81 542.56 L154.50 540.20" stroke="#fff" stroke-width="0.7"/><path d="M162.98 536.52 L160.67 534.16" stroke="#fff" stroke-width="0.7"/><g></g>
<g fill="#5a5a5a"></g><path d="M161.5 562 V558.5 H149.5 V570.5 H153" fill="none" stroke="#555" stroke-width="1"/><path d="M150 564.5 H158 M155.5 559 V567" stroke="#aaa" stroke-width="0.9"/><path d="M153.80 573.00 L156.32 572.45 L164.53 564.57 Q164.47 562.77 162.67 562.63 L154.45 570.50 Z" fill="#2b7cd3"/><path d="M156.82 572.39 L154.53 570.01" stroke="#fff" stroke-width="0.7"/><path d="M163.15 566.31 L160.87 563.93" stroke="#fff" stroke-width="0.7"/><g></g>
<g fill="#5a5a5a"></g><path d="M157.6 582 Q158.2 581.6 158.8 582.1 L161.6 585.1 Q162 585.8 161.5 586.3 L155.6 591.9 L152 588Z" fill="#fdd48a"/><path d="M150.6 588.8 L154.6 593 Q153.3 594.6 151.8 594 Q149.6 592.8 149 590.5Z" fill="#fccf86"/><g></g>
<g fill="#5a5a5a"></g><path d="M159 605.5 H149.5 V615" fill="none" stroke="#555" stroke-width="1"/><path d="M153.60 615.50 L156.12 614.94 L164.34 606.97 Q164.26 605.16 162.46 605.03 L154.24 613.00 Z" fill="#2b7cd3"/><path d="M156.62 614.88 L154.32 612.51" stroke="#fff" stroke-width="0.7"/><path d="M162.97 608.72 L160.67 606.35" stroke="#fff" stroke-width="0.7"/><rect x="148" y="617" width="16" height="3.7" fill="#fcd9ab"/><g></g>
<g fill="#5a5a5a"></g>
<g fill="#5a5a5a"></g><path d="M149.5 656.5 h12 v12 h-12 Z M149.5 662.5 h12 M155.5 656.5 v12" fill="none" stroke="#444" stroke-width="1.1"/><g></g>
<path d="M397 609.5 L401 613 L397 616.5Z" fill="#555"/>
<path d="M397 633 L401 636.5 L397 640Z" fill="#555"/>
<rect x="176" y="286" width="234" height="1" fill="#ebf0f0"/>
<rect x="176" y="384" width="234" height="1" fill="#ebf0f0"/>
</svg>
<div class="t mh" style="top:170.9px">Границы</div>
<div class="t mh" style="top:513.1px">Нарисовать границы</div>
<div class="t mi" style="top:196.0px">Ни<u>ж</u>няя граница</div>
<div class="t mi" style="top:220.0px"><u>В</u>ерхняя граница</div>
<div class="t mi" style="top:244.0px"><u>Л</u>евая граница</div>
<div class="t mi" style="top:268.0px">Права<u>я</u> граница</div>
<div class="t mi" style="top:294.7px">Нет гр<u>а</u>ницы</div>
<div class="t mi" style="top:318.8px">В<u>с</u>е границы</div>
<div class="t mi" style="top:342.6px">Вне<u>ш</u>ние границы</div>
<div class="t mi" style="top:366.4px">Толсты<u>е</u> внешние границы</div>
<div class="t mi" style="top:392.0px">Сдвоенная н<u>и</u>жняя граница</div>
<div class="t mi" style="top:416.0px"><u>Т</u>олстая нижняя граница</div>
<div class="t mi" style="top:440.0px">Верхняя и <u>н</u>ижняя границы</div>
<div class="t mi" style="top:464.0px">Вер<u>х</u>няя и толстая нижняя границы</div>
<div class="t mi" style="top:488.0px">Верхняя и сдвоенная нижняя границ<u>ы</u></div>
<div class="t mi" style="top:535.4px">Нарисоват<u>ь</u> границу</div>
<div class="t mi" style="top:559.6px">Нарис<u>о</u>вать сетку</div>
<div class="t mi" style="top:583.6px">Стереть границ<u>у</u></div>
<div class="t mi" style="top:607.6px"><u>Ц</u>вет линии</div>
<div class="t mi" style="top:631.1px">Ти<u>п</u> линии</div>
<div class="t mi" style="top:656.6px">Дру<u>г</u>ие границы...</div>
<!--MENUEND-->

<svg style="left:0;top:0" width="945" height="814">
 <defs><filter id="sh" x="-10%" y="-30%" width="120%" height="160%"><feDropShadow dx="1" dy="2.5" stdDeviation="1.6" flood-color="#000" flood-opacity="0.4"/></filter></defs>
 <rect x="139.7" y="647.5" width="272.8" height="30.3" rx="8" ry="8" fill="none" stroke="#f00" stroke-width="4.6" filter="url(#sh)"/>
</svg>
</body></html>
